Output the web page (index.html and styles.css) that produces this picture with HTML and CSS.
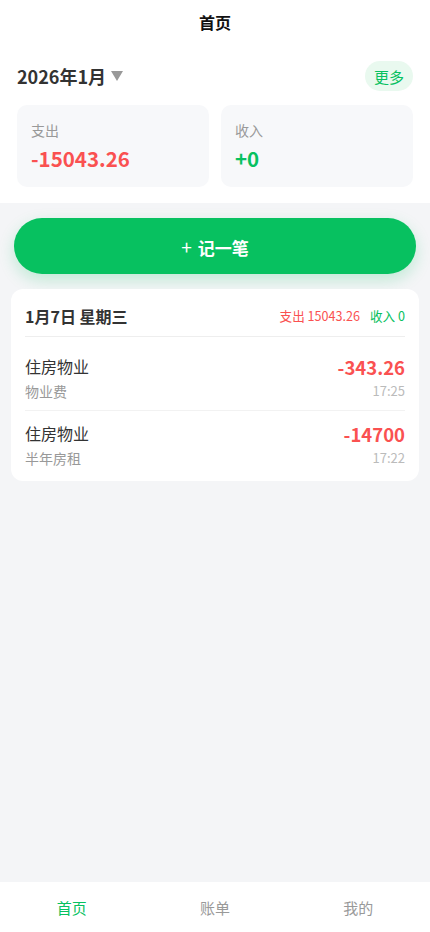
FILE: index.html
```html
<!DOCTYPE html>
<html lang="zh-CN">
<head>
<meta charset="utf-8">
<meta name="viewport" content="width=device-width, initial-scale=1">
<title>首页</title>
<link rel="stylesheet" href="styles.css">
</head>
<body>
<div class="app">
  <header class="nav">首页</header>
  <section class="overview">
    <div class="month-row">
      <div class="month">2026年1月
        <svg class="caret" width="12" height="10" viewBox="0 0 12 10"><path d="M0 0H12L6 10Z" fill="#999"/></svg>
      </div>
      <button class="more">更多</button>
    </div>
    <div class="stats">
      <div class="stat">
        <div class="stat-label">支出</div>
        <div class="stat-value expense">-15043.26</div>
      </div>
      <div class="stat">
        <div class="stat-label">收入</div>
        <div class="stat-value income">+0</div>
      </div>
    </div>
  </section>
  <main class="content">
    <button class="add-btn"><span class="plus">+</span>记一笔</button>
    <div class="day-card">
      <div class="day-head">
        <div class="day-title">1月7日 星期三</div>
        <div class="day-sum"><span class="expense">支出 15043.26</span><span class="income">收入 0</span></div>
      </div>
      <div class="records">
        <div class="record">
          <div class="rec-left">
            <div class="rec-title">住房物业</div>
            <div class="rec-note">物业费</div>
          </div>
          <div class="rec-right">
            <div class="rec-amount">-343.26</div>
            <div class="rec-time">17:25</div>
          </div>
        </div>
        <div class="record">
          <div class="rec-left">
            <div class="rec-title">住房物业</div>
            <div class="rec-note">半年房租</div>
          </div>
          <div class="rec-right">
            <div class="rec-amount">-14700</div>
            <div class="rec-time">17:22</div>
          </div>
        </div>
      </div>
    </div>
  </main>
  <nav class="tabbar">
    <div class="tab active">首页</div>
    <div class="tab">账单</div>
    <div class="tab">我的</div>
  </nav>
</div>
</body>
</html>
```
FILE: styles.css
```css
* { box-sizing: border-box; }
html, body { margin: 0; padding: 0; }
body {
  font-family: "Noto Sans CJK SC", "Noto Sans", sans-serif;
  background: #f4f5f7;
  color: #333;
}
.app {
  display: flex;
  flex-direction: column;
  height: 100vh;
}
.nav {
  height: 44px;
  line-height: 44px;
  text-align: center;
  font-size: 16px;
  font-weight: 700;
  color: #111;
  background: #fff;
}
.overview {
  background: #fff;
  padding: 17px 17px 16px;
}
.month-row {
  display: flex;
  align-items: center;
  justify-content: space-between;
  height: 30px;
}
.month {
  display: flex;
  align-items: center;
  font-size: 18px;
  font-weight: 700;
  color: #333;
  line-height: 30px;
}
.caret { margin-left: 5px; margin-top: 0; }
.more {
  border: none;
  background: #e9f9ef;
  color: #07c160;
  font-family: inherit;
  font-size: 15px;
  height: 30px;
  width: 48px;
  padding: 0;
  border-radius: 15px;
}
.stats {
  display: grid;
  grid-template-columns: 1fr 1fr;
  gap: 12px;
  margin-top: 14px;
}
.stat {
  background: #f7f8fa;
  border-radius: 10px;
  padding: 15px 14px 13px;
  height: 82px;
}
.stat-label {
  font-size: 14px;
  line-height: 20px;
  color: #999;
}
.stat-value {
  margin-top: 4px;
  font-size: 20.5px;
  line-height: 29px;
  font-weight: 700;
}
.expense { color: #fa5151; }
.income { color: #07c160; }
.content {
  flex: 1;
  padding: 15px 11px 0;
  display: flex;
  flex-direction: column;
}
.add-btn {
  margin: 0 3px;
  height: 56px;
  border: none;
  border-radius: 28px;
  background: #07c160;
  color: #fff;
  font-family: inherit;
  font-size: 17px;
  font-weight: 700;
  box-shadow: 0 6px 16px rgba(7, 193, 96, 0.22);
}
.plus {
  font-weight: 400;
  font-size: 19px;
  margin-right: 6px;
}
.day-card {
  margin-top: 15px;
  background: #fff;
  border-radius: 12px;
  padding: 0 14px 4px;
}
.day-head {
  display: flex;
  justify-content: space-between;
  align-items: center;
  padding: 16px 0 9px;
  border-bottom: 1px solid #eeeeee;
}
.day-title {
  font-size: 16px;
  line-height: 22px;
  font-weight: 700;
  color: #333;
}
.day-sum {
  display: flex;
  gap: 10px;
  font-size: 12.6px;
  line-height: 22px;
}
.records { padding-top: 7px; }
.record {
  display: flex;
  justify-content: space-between;
  padding: 11px 0 9px;
}
.record + .record { border-top: 1px solid #f2f2f2; }
.rec-title {
  font-size: 16px;
  line-height: 22px;
  color: #333;
}
.rec-note {
  margin-top: 4px;
  font-size: 14px;
  line-height: 20px;
  color: #999;
}
.rec-right { text-align: right; }
.rec-amount {
  font-size: 18.5px;
  line-height: 24px;
  font-weight: 700;
  color: #fa5151;
}
.rec-time {
  margin-top: 2px;
  font-size: 13px;
  line-height: 20px;
  color: #bbb;
}
.tabbar {
  height: 50px;
  background: #fff;
  display: grid;
  grid-template-columns: repeat(3, 1fr);
  align-items: center;
}
.tab {
  text-align: center;
  font-size: 15px;
  line-height: 20px;
  color: #999;
  padding-top: 2px;
}
.tab.active { color: #07c160; }
```
